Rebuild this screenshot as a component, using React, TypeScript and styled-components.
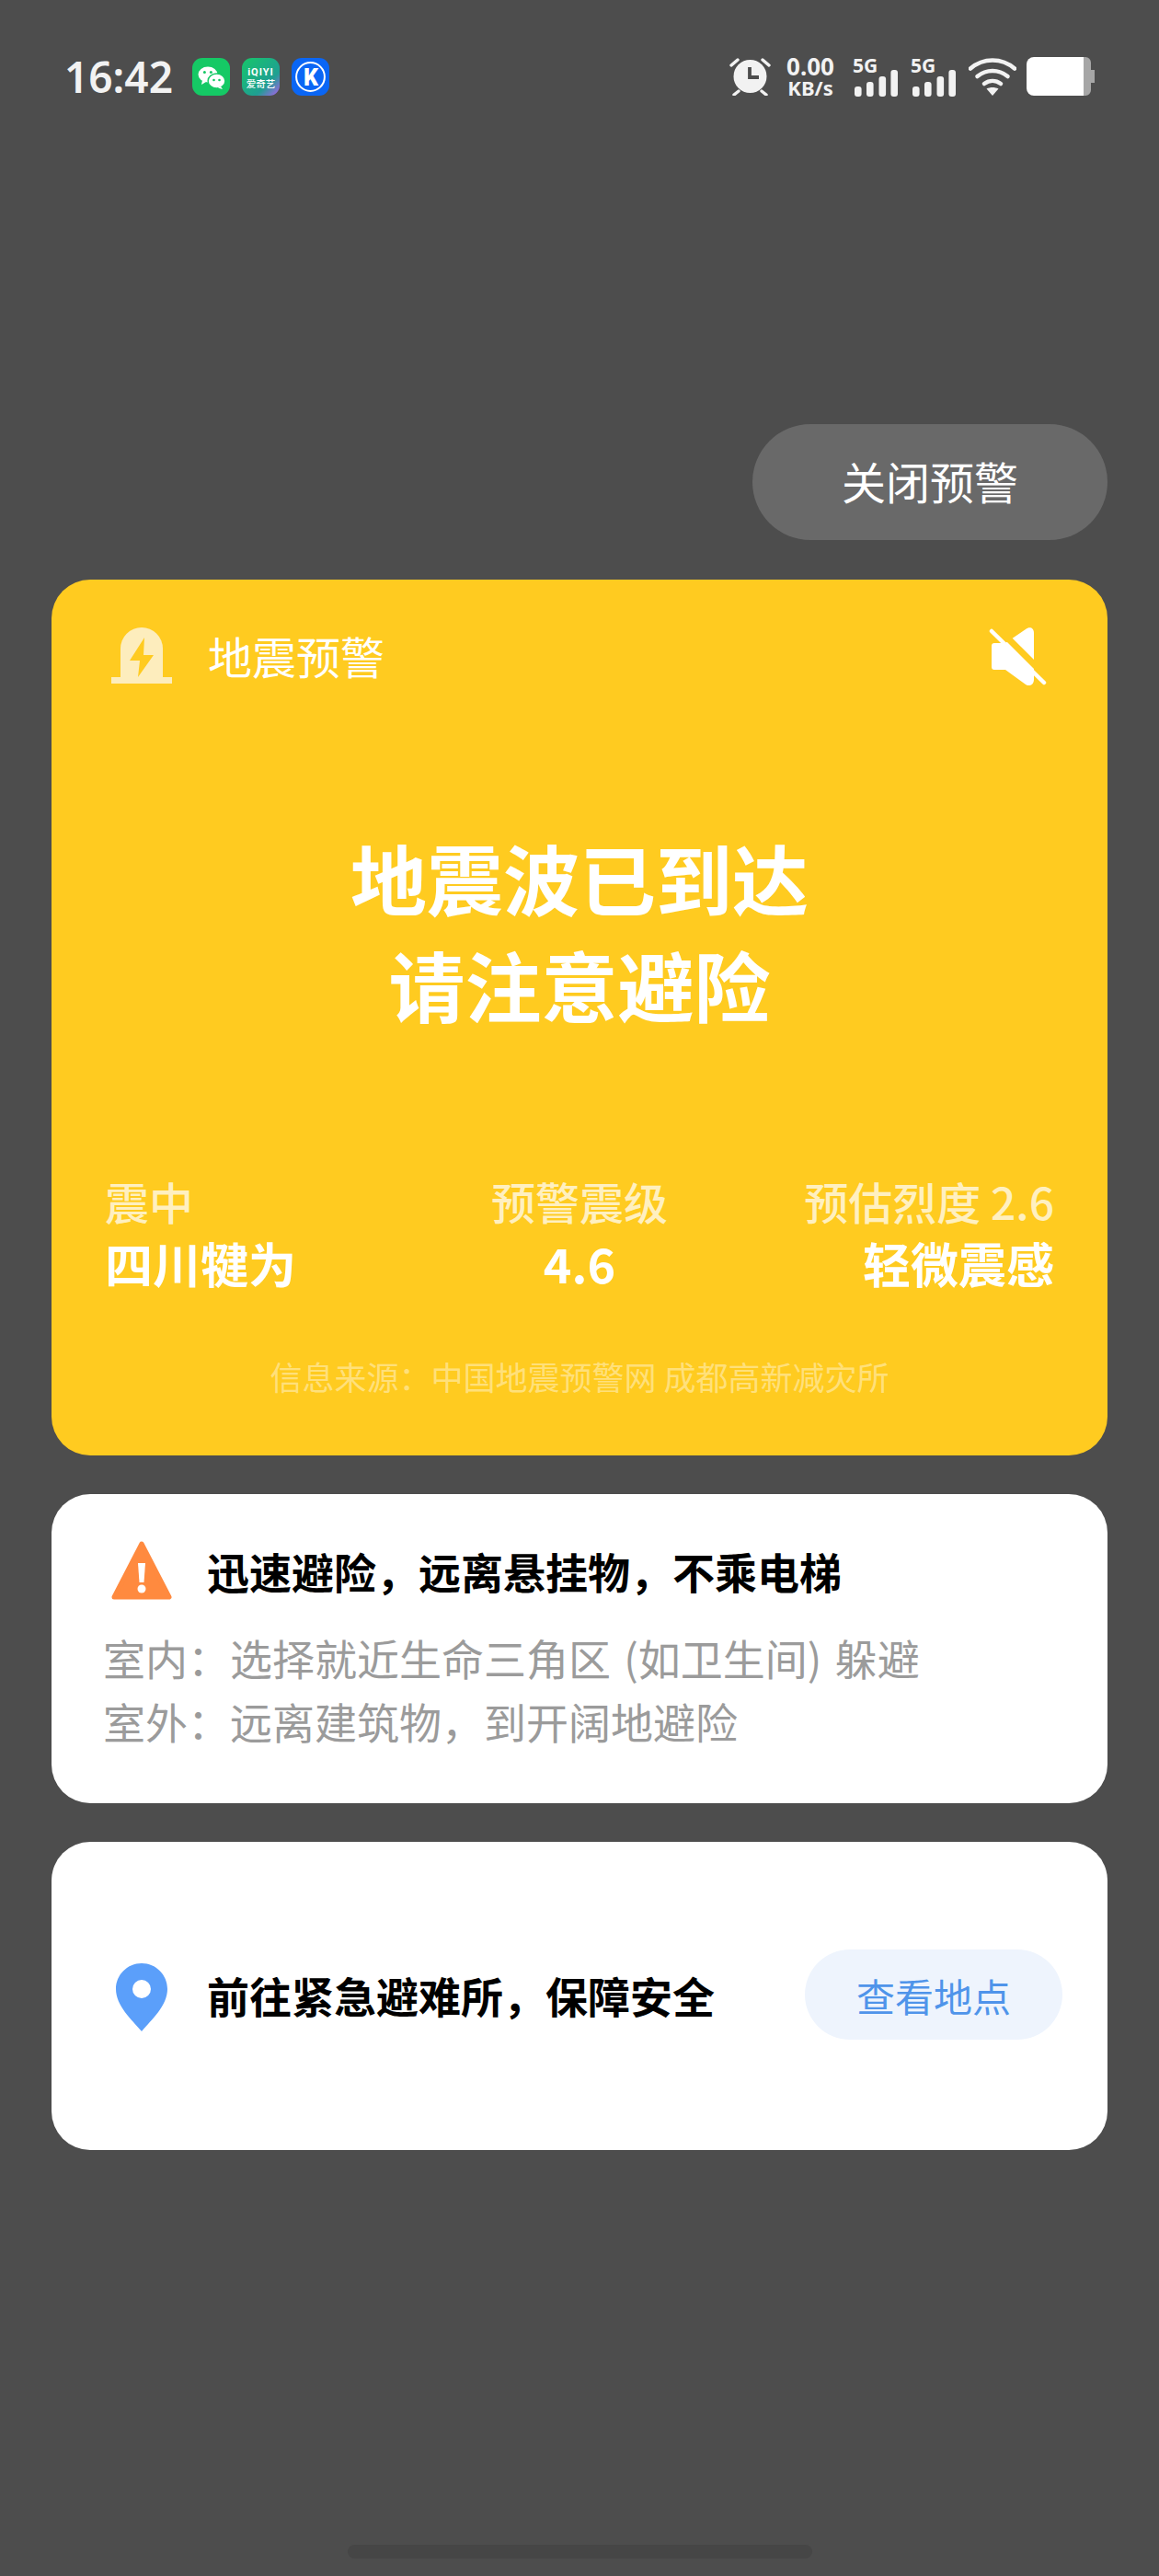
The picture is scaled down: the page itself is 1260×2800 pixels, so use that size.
import React from "react";
import styled, { createGlobalStyle } from "styled-components";

const cjk = `"Noto Sans CJK SC", "Noto Sans", sans-serif`;

const GlobalStyle = createGlobalStyle`
  html, body {
    margin: 0;
    padding: 0;
    background: #4d4d4d;
  }
  * {
    box-sizing: border-box;
  }
`;

const App = () => {
  return (
    <Page>
      <GlobalStyle />
      <StatusBar>
        <StatusLeft>
          <Clock>16:42</Clock>
          <WeChatIcon />
          <IqiyiIcon />
          <KIcon />
        </StatusLeft>
        <StatusRight>
          <AlarmIcon />
          <NetSpeed>
            <NetValue>0.00</NetValue>
            <NetUnit>KB/s</NetUnit>
          </NetSpeed>
          <SignalIcon />
          <SignalIcon />
          <WifiWrap>
            <WifiIcon />
          </WifiWrap>
          <BatteryIcon />
        </StatusRight>
      </StatusBar>

      <CloseRow>
        <CloseButton>关闭预警</CloseButton>
      </CloseRow>

      <AlertCard>
        <AlertHeader>
          <AlertHeaderLeft>
            <SirenIcon />
            <AlertName>地震预警</AlertName>
          </AlertHeaderLeft>
          <MuteIcon />
        </AlertHeader>
        <Headline>
          地震波已到达
          <br />
          请注意避险
        </Headline>
        <Stats>
          <Stat $align="left">
            <StatLabel>震中</StatLabel>
            <StatValue>四川犍为</StatValue>
          </Stat>
          <Stat $align="center">
            <StatLabel>预警震级</StatLabel>
            <StatValue>4.6</StatValue>
          </Stat>
          <Stat $align="right">
            <StatLabel>预估烈度 2.6</StatLabel>
            <StatValue>轻微震感</StatValue>
          </Stat>
        </Stats>
        <Source>信息来源：中国地震预警网 成都高新减灾所</Source>
      </AlertCard>

      <AdviceCard>
        <AdviceTitleRow>
          <WarningIcon />
          <CardTitle>迅速避险，远离悬挂物，不乘电梯</CardTitle>
        </AdviceTitleRow>
        <AdviceLine>室内：选择就近生命三角区 (如卫生间) 躲避</AdviceLine>
        <AdviceLine>室外：远离建筑物，到开阔地避险</AdviceLine>
      </AdviceCard>

      <ShelterCard>
        <ShelterLeft>
          <PinIcon />
          <CardTitle>前往紧急避难所，保障安全</CardTitle>
        </ShelterLeft>
        <ShelterButton>查看地点</ShelterButton>
      </ShelterCard>

      <HomeBarRow>
        <HomeBar />
      </HomeBarRow>
    </Page>
  );
};

const WeChatIcon = () => (
  <AppBadge viewBox="0 0 41 41">
    <rect width="41" height="41" rx="11" fill="#15c965" />
    <ellipse cx="17" cy="18" rx="10.500" ry="8.500" fill="#fff" />
    <path d="M11 24l-1 5 5-3z" fill="#fff" />
    <ellipse cx="26.500" cy="25" rx="9.400" ry="8" fill="#fff" stroke="#15c965" strokeWidth="1.400" />
    <path d="M31 31l2 3-5-1.600z" fill="#fff" />
    <circle cx="13.400" cy="15.500" r="1.500" fill="#15c965" />
    <circle cx="20.400" cy="15.500" r="1.500" fill="#15c965" />
    <circle cx="23.500" cy="24" r="1.300" fill="#15c965" />
    <circle cx="29.500" cy="24" r="1.300" fill="#15c965" />
  </AppBadge>
);

const IqiyiIcon = () => (
  <AppBadge viewBox="0 0 41 41">
    <defs>
      <linearGradient id="iqiyi" x1="0" y1="0" x2="1" y2="1">
        <stop offset="0" stopColor="#17c76a" />
        <stop offset="0.68" stopColor="#1f9f92" />
        <stop offset="1" stopColor="#b05cf0" />
      </linearGradient>
    </defs>
    <rect width="41" height="41" rx="11" fill="url(#iqiyi)" />
    <text x="20.500" y="19" textAnchor="middle" fontSize="11" letterSpacing="1" fontWeight="700" fontFamily="Roboto, sans-serif" fill="#fff">
      iQIYI
    </text>
    <text x="20.500" y="32" textAnchor="middle" fontSize="10.500" fontWeight="500" fontFamily={cjk} fill="#fff">
      爱奇艺
    </text>
  </AppBadge>
);

const KIcon = () => (
  <AppBadge viewBox="0 0 41 41">
    <rect width="41" height="41" rx="11" fill="#0a66f5" />
    <circle cx="20.500" cy="20.500" r="15.400" fill="none" stroke="#fff" strokeWidth="2" />
    <text x="21" y="29.500" textAnchor="middle" fontSize="25" fontWeight="900" fontFamily="Roboto, sans-serif" fill="#fff">
      K
    </text>
  </AppBadge>
);

const AlarmIcon = () => (
  <svg width="45" height="42" viewBox="0 0 45 42">
    <circle cx="22.500" cy="21" r="18" fill="#f2f2f2" />
    <path d="M22 11v11h10" fill="none" stroke="#4d4d4d" strokeWidth="3.800" />
    <path d="M2 9l7-6M43 9l-7-6M5 41l5-4M40 41l-5-4" stroke="#f2f2f2" strokeWidth="3.400" strokeLinecap="round" />
  </svg>
);

const SignalIcon = () => (
  <SignalWrap>
    <SignalLabel>5G</SignalLabel>
    <svg width="47" height="29" viewBox="0 0 47 29">
      <rect x="0" y="18" width="7.600" height="11" rx="3" fill="#f2f2f2" />
      <rect x="13" y="13" width="7.600" height="16" rx="3" fill="#f2f2f2" />
      <rect x="26.500" y="7" width="7.600" height="22" rx="3" fill="#f2f2f2" />
      <rect x="39.400" y="0" width="7.600" height="29" rx="3" fill="#f2f2f2" />
    </svg>
  </SignalWrap>
);

const WifiIcon = () => (
  <svg width="52" height="42" viewBox="0 0 52 42">
    <path d="M2 12.500C16 .5 36 .5 50 12.500" fill="none" stroke="#f2f2f2" strokeWidth="4.600" strokeLinecap="round" />
    <path d="M9.500 21c10-8 23-8 33 0" fill="none" stroke="#f2f2f2" strokeWidth="4.600" strokeLinecap="round" />
    <path d="M17 29c5.500-4 12.500-4 18 0" fill="none" stroke="#f2f2f2" strokeWidth="4.600" strokeLinecap="round" />
    <path d="M19.500 34.500c4-2 9-2 13 0L26 42z" fill="#f2f2f2" />
  </svg>
);

const BatteryIcon = () => (
  <svg width="74" height="42" viewBox="0 0 74 42">
    <path d="M62 0h2a6 6 0 0 1 6 6v8h4v14h-4v8a6 6 0 0 1-6 6h-2z" fill="#a6a6a6" />
    <path d="M8 0h54c0 14 0 28 0 42H8a8 8 0 0 1-8-8V8a8 8 0 0 1 8-8z" fill="#fff" />
  </svg>
);

const SirenIcon = () => (
  <svg width="66" height="61" viewBox="0 0 66 61">
    <path d="M10 55V23a23 23 0 0 1 46 0v32z" fill="#fdedbd" />
    <rect x="0" y="54" width="66" height="7" fill="#fdedbd" />
    <path d="M36 11L20 36h11l-2 18 17-24H35z" fill="#ffcb20" />
  </svg>
);

const MuteIcon = () => (
  <svg width="65" height="63" viewBox="0 0 65 63">
    <path d="M6 17h12L40 2c4-3 9-2 9 4v51c0 5-5 8-9 5L18 46H6a3 3 0 0 1-3-3V20a3 3 0 0 1 3-3z" fill="#fff" />
    <path d="M8-1l58 58" stroke="#ffcb20" strokeWidth="7" />
    <path d="M3 4l57 56" stroke="#fff" strokeWidth="4.500" strokeLinecap="round" />
  </svg>
);

const WarningIcon = () => (
  <svg width="66" height="64" viewBox="0 0 66 64">
    <path d="M33 3L63 61H3z" fill="#ff8a3f" stroke="#ff8a3f" strokeWidth="5" strokeLinejoin="round" />
    <path d="M29 24h8l-1.500 21h-5z" fill="#fff" />
    <circle cx="33" cy="52" r="4.500" fill="#fff" />
  </svg>
);

const PinIcon = () => (
  <svg width="56" height="80" viewBox="0 -6 56 80">
    <path d="M28 0C12.500 0 0 12.500 0 28c0 18 17 33 28 46 11-13 28-28 28-46C56 12.500 43.500 0 28 0z" fill="#5b9ffa" />
    <circle cx="28" cy="28" r="10" fill="#fff" />
  </svg>
);

const Page = styled.div`
  width: 1260px;
  height: 2800px;
  overflow: hidden;
  background: #4d4d4d;
  padding: 60px 56px 0;
  display: flex;
  flex-direction: column;
  font-family: ${cjk};
`;

const StatusBar = styled.div`
  height: 46px;
  padding: 0 14px;
  display: flex;
  align-items: center;
  justify-content: space-between;
`;

const StatusLeft = styled.div`
  display: flex;
  align-items: center;
  gap: 13px;
`;

const Clock = styled.span`
  font-family: "Noto Sans", sans-serif;
  font-size: 46px;
  line-height: 46px;
  font-weight: 600;
  color: #f2f2f2;
  margin-right: 8px;
`;

const AppBadge = styled.svg`
  width: 41px;
  height: 41px;
`;

const StatusRight = styled.div`
  display: flex;
  align-items: center;
  gap: 14px;
`;

const NetSpeed = styled.div`
  width: 52px;
  margin: 0 6px 0 3px;
  display: flex;
  flex-direction: column;
  align-items: center;
  font-family: "Noto Sans", sans-serif;
  font-weight: 700;
  color: #f2f2f2;
`;

const NetValue = styled.span`
  font-size: 26px;
  line-height: 25px;
`;

const NetUnit = styled.span`
  font-size: 22px;
  line-height: 21px;
`;

const SignalWrap = styled.div`
  position: relative;
  width: 49px;
  height: 44px;
  display: flex;
  align-items: flex-end;
  justify-content: flex-end;
`;

const SignalLabel = styled.span`
  position: absolute;
  left: 0;
  top: -3px;
  font-family: "Noto Sans", sans-serif;
  font-size: 21px;
  line-height: 26px;
  font-weight: 700;
  color: #f2f2f2;
`;

const WifiWrap = styled.div`
  display: flex;
  margin-right: -3px;
`;

const CloseRow = styled.div`
  margin-top: 355px;
  display: flex;
  justify-content: flex-end;
`;

const CloseButton = styled.div`
  width: 386px;
  height: 126px;
  padding-bottom: 4px;
  border-radius: 63px;
  background: #696969;
  color: #fff;
  font-size: 48px;
  display: flex;
  align-items: center;
  justify-content: center;
`;

const AlertCard = styled.div`
  margin-top: 43px;
  height: 952px;
  border-radius: 42px;
  background: #ffcb20;
  padding: 52px 58px 0;
  display: flex;
  flex-direction: column;
`;

const AlertHeader = styled.div`
  display: flex;
  align-items: flex-start;
  justify-content: space-between;
  padding-right: 6px;
`;

const AlertHeaderLeft = styled.div`
  display: flex;
  align-items: center;
  gap: 39px;
  padding-left: 7px;
`;

const AlertName = styled.span`
  font-size: 48px;
  line-height: 61px;
  color: #fff;
`;

const Headline = styled.div`
  margin-top: 150px;
  text-align: center;
  font-size: 83px;
  line-height: 116px;
  font-weight: 700;
  color: #fff;
`;

const Stats = styled.div`
  margin-top: 144px;
  display: grid;
  grid-template-columns: 1fr auto 1fr;
`;

const Stat = styled.div<{ $align: "left" | "center" | "right" }>`
  display: flex;
  flex-direction: column;
  text-align: ${(p) => p.$align};
`;

const StatLabel = styled.span`
  font-size: 48px;
  line-height: 68px;
  font-weight: 500;
  color: rgba(255, 255, 255, 0.72);
`;

const StatValue = styled.span`
  font-size: 52px;
  line-height: 68px;
  font-weight: 700;
  color: #fff;
`;

const Source = styled.div`
  margin-top: 64px;
  text-align: center;
  font-size: 35px;
  line-height: 50px;
  color: rgba(255, 255, 255, 0.42);
`;

const AdviceCard = styled.div`
  margin-top: 42px;
  height: 336px;
  border-radius: 42px;
  background: #fff;
  padding: 49px 58px 0;
`;

const AdviceTitleRow = styled.div`
  display: flex;
  align-items: center;
  gap: 38px;
  padding-left: 7px;
  margin-bottom: 26px;
`;

const CardTitle = styled.span`
  font-size: 46px;
  line-height: 68px;
  font-weight: 700;
  color: #000;
`;

const AdviceLine = styled.div`
  margin-left: -2px;
  font-size: 46px;
  line-height: 69px;
  word-spacing: 4px;
  color: #9b9b9b;
`;

const ShelterCard = styled.div`
  margin-top: 42px;
  height: 335px;
  border-radius: 42px;
  background: #fff;
  padding: 0 49px 3px 70px;
  display: flex;
  align-items: center;
  justify-content: space-between;
`;

const ShelterLeft = styled.div`
  display: flex;
  align-items: center;
  gap: 43px;
`;

const ShelterButton = styled.div`
  width: 280px;
  height: 98px;
  border-radius: 49px;
  background: #eef4fd;
  color: #4f94ea;
  font-size: 42px;
  display: flex;
  align-items: center;
  justify-content: center;
`;

const HomeBarRow = styled.div`
  margin-top: 429px;
  display: flex;
  justify-content: center;
`;

const HomeBar = styled.div`
  width: 505px;
  height: 15px;
  border-radius: 8px;
  background: #464646;
`;

export default App;
